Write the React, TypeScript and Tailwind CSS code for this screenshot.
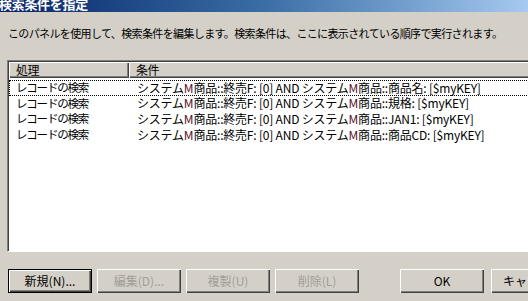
const rows = [
  '商品名',
  '規格',
  'JAN1',
  '商品CD',
];

const font = { fontFamily: '"Noto Sans CJK JP", "Liberation Sans", sans-serif' };

function Btn({ label, disabled, isDefault, className = '' }: { label: string; disabled?: boolean; isDefault?: boolean; className?: string }) {
  const base = isDefault
    ? 'border border-black shadow-[inset_1px_1px_0_#fff,inset_-1px_-1px_0_#404040,inset_-2px_-2px_0_#808080]'
    : 'shadow-[inset_1px_1px_0_#fff,inset_-1px_-1px_0_#404040,inset_-2px_-2px_0_#808080]';
  return (
    <div
      className={`h-[24px] w-[84px] shrink-0 flex items-center justify-center bg-[#d4d0c8] text-[12px] leading-none ${base} ${
        disabled ? 'text-[#a19e98]' : 'text-black'
      } ${className}`}
    >
      {label}
    </div>
  );
}

export default function App() {
  return (
    <div className="w-[528px] h-[301px] overflow-hidden bg-[#d4d0c8] flex flex-col" style={font}>
      {/* Title bar */}
      <div className="h-[12px] shrink-0 bg-gradient-to-r from-[#0a246a] via-[#3a6ea5] to-[#a6caf0] overflow-hidden relative">
        <div className="text-white font-bold text-[13px] leading-none tracking-[-0.3px] -mt-[3px] -ml-[1px]">
          検索条件を指定
        </div>
      </div>

      {/* Description */}
      <div className="mt-[15px] pl-[8px] text-[11px] leading-[12px] tracking-[-0.63px] text-black whitespace-nowrap">
        このパネルを使用して、検索条件を編集します。検索条件は、ここに表示されている順序で実行されます。
      </div>

      {/* List */}
      <div className="mt-[21px] ml-[7px] w-[540px] h-[192px] shrink-0 bg-white border-t border-l border-[#808080] border-b border-b-white shadow-[inset_1px_1px_0_#404040] pt-[1px] pl-[1px]">
        <div className="flex h-[16px] text-[12px] leading-none text-black tracking-[-0.5px]">
          <div className="w-[120px] flex items-center pl-[7px] bg-[#d4d0c8] shadow-[inset_1px_1px_0_#fff,inset_-1px_-1px_0_#404040,inset_-2px_-2px_0_#808080]">
            処理
          </div>
          <div className="flex-1 flex items-center pl-[7px] bg-[#d4d0c8] shadow-[inset_1px_1px_0_#fff,inset_0_-1px_0_#404040,inset_0_-2px_0_#808080]">
            条件
          </div>
        </div>
        <div className="mt-[2px]">
          {rows.map((r, i) => (
            <div
              key={i}
              className={`flex items-center h-[15.67px] leading-none text-black ${
                i === 0 ? 'border border-dotted border-black' : 'border border-transparent'
              }`}
            >
              <div className="w-[127px] pl-[6px] shrink-0 text-[11.5px] tracking-[-1.2px]">レコードの検索</div>
              <div className="whitespace-nowrap text-[12px] tracking-[-0.2px]">
                システム<span className="text-[#5a1030]">M</span>商品::終売F: [0] AND システム
                <span className="text-[#5a1030]">M</span>商品::{r}: [$myKEY]
              </div>
            </div>
          ))}
        </div>
      </div>

      {/* Buttons */}
      <div className="mt-[17px] flex pl-[8px]">
        <Btn label="新規(N)..." isDefault />
        <Btn label="編集(D)..." disabled className="ml-[5px]" />
        <Btn label="複製(U)" disabled className="ml-[5px]" />
        <Btn label="削除(L)" disabled className="ml-[5px]" />
        <Btn label="OK" className="ml-[41px]" />
        <Btn label="キャンセル" className="ml-[7px]" />
      </div>
    </div>
  );
}
